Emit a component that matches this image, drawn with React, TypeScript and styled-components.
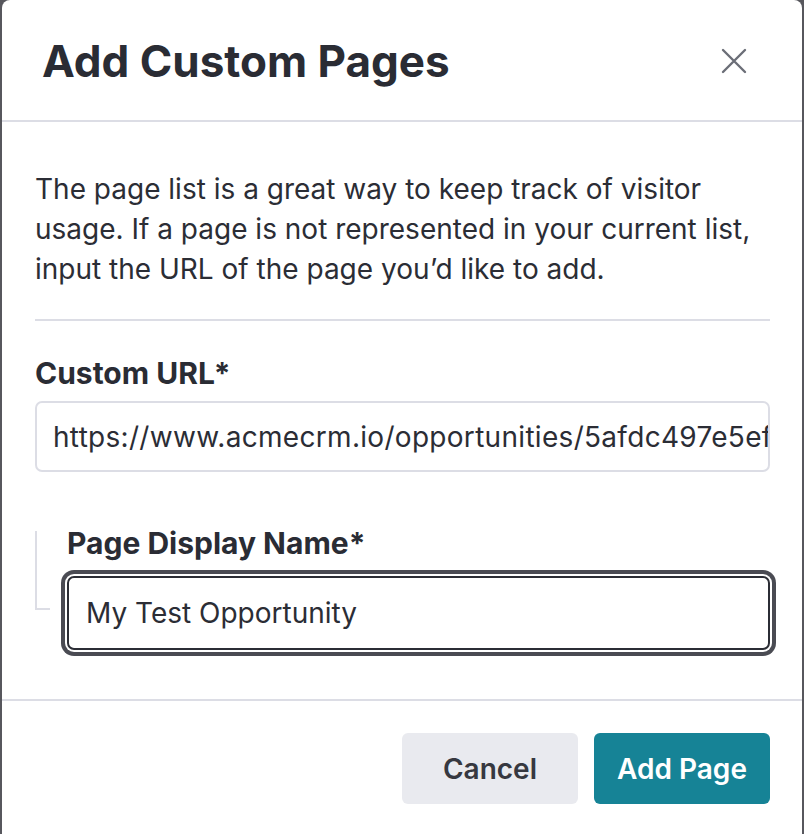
import React from "react";
import styled, { createGlobalStyle } from "styled-components";

const GlobalStyle = createGlobalStyle`
  html, body { margin: 0; padding: 0; }
  body {
    background: #57575d;
    font-family: Inter, "Noto Sans", sans-serif;
    -webkit-font-smoothing: antialiased;
  }
  * { box-sizing: border-box; }
`;

const Backdrop = styled.div`
  width: 804px;
  height: 834px;
  overflow: hidden;
  background: #57575d;
  padding: 0 2px 0 2px;
`;

const Modal = styled.div`
  width: 800px;
  min-height: 860px;
  background: #ffffff;
  border-radius: 8px 8px 0 0;
  display: flex;
  flex-direction: column;
`;

const Header = styled.div`
  height: 122px;
  display: flex;
  align-items: flex-start;
  justify-content: space-between;
  padding: 33px 54px 0 40px;
  border-bottom: 2px solid #dcdde5;
`;

const Title = styled.h1`
  margin: 0;
  font-size: 44px;
  line-height: 56px;
  font-weight: 700;
  color: #2a2c34;
`;

const CloseButton = styled.button`
  border: none;
  background: none;
  padding: 0;
  margin-top: 14px;
  width: 28px;
  height: 28px;
  display: flex;
  align-items: center;
  justify-content: center;
  color: #6b6e77;
  cursor: pointer;
`;

const Body = styled.div`
  padding: 47px 32px 0 33px;
  display: flex;
  flex-direction: column;
`;

const Intro = styled.p`
  margin: 0;
  font-size: 28px;
  line-height: 40px;
  color: #2b2d35;
  font-weight: 400;
`;

const Divider = styled.hr`
  margin: 30px 0 0 0;
  border: none;
  height: 2px;
  background: #dcdde5;
`;

const Field = styled.div`
  display: flex;
  flex-direction: column;
  gap: 12px;
  margin-top: 36px;
`;

const Label = styled.label`
  font-size: 30px;
  line-height: 32px;
  font-weight: 700;
  color: #2a2c34;
`;

const TextInput = styled.input<{ $focused?: boolean }>`
  width: 100%;
  height: ${(p) => (p.$focused ? "74px" : "71px")};
  border: ${(p) => (p.$focused ? "2px solid #2b2d35" : "2px solid #dcdde5")};
  border-radius: 7px;
  padding: 0 0 0 ${(p) => (p.$focused ? "17px" : "16px")};
  font-family: Inter, "Noto Sans", sans-serif;
  font-size: 28px;
  letter-spacing: ${(p) => (p.$focused ? "0" : "0.3px")};
  color: #2b2d35;
  background: #fff;
  outline: none;
  box-shadow: ${(p) =>
    p.$focused ? "0 0 0 2px #ffffff, 0 0 0 6px #4a4b53" : "none"};
`;

const NestedRow = styled.div`
  display: flex;
  gap: 12px;
  margin-top: 55px;
`;

const Bracket = styled.div`
  width: 15px;
  height: 79px;
  margin-top: 4px;
  border-left: 2px solid #dcdde5;
  border-bottom: 2px solid #dcdde5;
  flex-shrink: 0;
`;

const NestedField = styled.div`
  flex: 1;
  display: flex;
  flex-direction: column;
  gap: 17px;
  margin-left: 5px;
`;

const Footer = styled.div`
  margin-top: 49px;
  border-top: 2px solid #dcdde5;
  padding: 32px 32px 0 0;
  display: flex;
  justify-content: flex-end;
  gap: 16px;
`;

const Button = styled.button<{ $primary?: boolean }>`
  width: 176px;
  height: 71px;
  border: none;
  border-radius: 6px;
  font-family: Inter, "Noto Sans", sans-serif;
  font-size: 28px;
  font-weight: 600;
  cursor: pointer;
  background: ${(p) => (p.$primary ? "#168396" : "#e9eaef")};
  color: ${(p) => (p.$primary ? "#ffffff" : "#363840")};
`;

export default function App() {
  return (
    <>
      <GlobalStyle />
      <Backdrop>
        <Modal>
          <Header>
            <Title>Add Custom Pages</Title>
            <CloseButton aria-label="Close">
              <svg width="26" height="26" viewBox="0 0 26 26" fill="none">
                <path
                  d="M2 2L24 24M24 2L2 24"
                  stroke="currentColor"
                  strokeWidth="2.4"
                  strokeLinecap="round"
                />
              </svg>
            </CloseButton>
          </Header>
          <Body>
            <Intro>
              The page list is a great way to keep track of visitor usage. If a
              page is not represented in your current list, input the URL of the
              page you’d like to add.
            </Intro>
            <Divider />
            <Field>
              <Label>Custom URL*</Label>
              <TextInput
                readOnly
                value="https://www.acmecrm.io/opportunities/5afdc497e5ef0123456789"
              />
            </Field>
            <NestedRow>
              <Bracket />
              <NestedField>
                <Label>Page Display Name*</Label>
                <TextInput $focused readOnly value="My Test Opportunity" />
              </NestedField>
            </NestedRow>
          </Body>
          <Footer>
            <Button>Cancel</Button>
            <Button $primary>Add Page</Button>
          </Footer>
        </Modal>
      </Backdrop>
    </>
  );
}
